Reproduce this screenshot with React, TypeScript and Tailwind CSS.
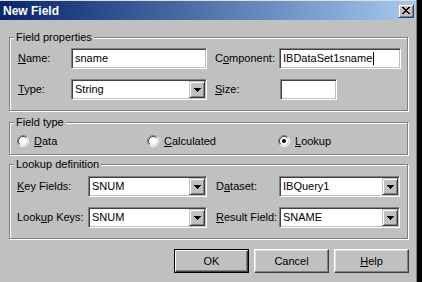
import type { ReactNode } from 'react';

const sunken =
  'border border-t-[#808080] border-l-[#808080] border-b-white border-r-white shadow-[inset_1px_1px_0_#404040,inset_-1px_-1px_0_#c0c0c0]';
const raised =
  'border border-t-[#c0c0c0] border-l-[#c0c0c0] border-b-[#404040] border-r-[#404040] shadow-[inset_1px_1px_0_#fff,inset_-1px_-1px_0_#808080] bg-[#c0c0c0]';

const U = ({ children }: { children: ReactNode }) => <span className="underline">{children}</span>;

const Group = ({ title, className, children }: { title: string; className: string; children: ReactNode }) => (
  <div className={`relative ml-[9px] w-[399px] border border-[#808080] shadow-[inset_1px_1px_0_#fff,1px_1px_0_#fff] ${className}`}>
    <span className="absolute left-[4px] top-[-7px] bg-[#c0c0c0] px-[2px] leading-[13px]">{title}</span>
    {children}
  </div>
);

const TextBox = ({ value, width, caret }: { value: string; width: string; caret?: boolean }) => (
  <div className={`${sunken} ${width} h-[21px] bg-white flex items-center pl-[3px] overflow-hidden whitespace-nowrap`}>
    {value}
    {caret && <span className="ml-px w-px h-[13px] bg-black" />}
  </div>
);

const Arrow = () => (
  <svg width="7" height="4" viewBox="0 0 7 4" shapeRendering="crispEdges">
    <rect x="0" y="0" width="7" height="1" fill="#000" />
    <rect x="1" y="1" width="5" height="1" fill="#000" />
    <rect x="2" y="2" width="3" height="1" fill="#000" />
    <rect x="3" y="3" width="1" height="1" fill="#000" />
  </svg>
);

const Combo = ({ value, width }: { value: string; width: string }) => (
  <div className={`${sunken} ${width} h-[21px] bg-white flex items-center pl-[3px] pr-px whitespace-nowrap`}>
    <span>{value}</span>
    <div className={`${raised} ml-auto w-[16px] h-[17px] flex items-center justify-center`}>
      <Arrow />
    </div>
  </div>
);

const Radio = ({ checked, children, width }: { checked?: boolean; children: ReactNode; width: string }) => (
  <div className={`flex items-center ${width}`}>
    <svg width="12" height="12" viewBox="0 0 12 12">
      <circle cx="6" cy="6" r="5" fill="#fff" />
      <path d="M2.11 9.89 A5.5 5.5 0 0 1 9.89 2.11" stroke="#808080" fill="none" />
      <path d="M9.89 2.11 A5.5 5.5 0 0 1 2.11 9.89" stroke="#fff" fill="none" />
      <path d="M2.82 9.18 A4.5 4.5 0 0 1 9.18 2.82" stroke="#404040" fill="none" />
      <path d="M9.18 2.82 A4.5 4.5 0 0 1 2.82 9.18" stroke="#d4d0c8" fill="none" />
      {checked && <circle cx="6" cy="6" r="2" fill="#000" />}
    </svg>
    <span className="ml-[5px]">{children}</span>
  </div>
);

const Button = ({ children, isDefault }: { children: ReactNode; isDefault?: boolean }) =>
  isDefault ? (
    <div className="w-[75px] h-[24px] border border-black">
      <div className="w-full h-full border border-t-white border-l-white border-b-[#404040] border-r-[#404040] shadow-[inset_-1px_-1px_0_#808080] flex items-center justify-center">
        {children}
      </div>
    </div>
  ) : (
    <div className="w-[75px] h-[24px] border border-t-white border-l-white border-b-[#404040] border-r-[#404040] shadow-[inset_-1px_-1px_0_#808080,inset_1px_1px_0_#dfdfdf] flex items-center justify-center">
      {children}
    </div>
  );

const CloseIcon = () => (
  <svg width="8" height="7" viewBox="0 0 8 7" shapeRendering="crispEdges">
    <rect x="0" y="0" width="2" height="1" />
    <rect x="6" y="0" width="2" height="1" />
    <rect x="1" y="1" width="2" height="1" />
    <rect x="5" y="1" width="2" height="1" />
    <rect x="2" y="2" width="4" height="1" />
    <rect x="3" y="3" width="2" height="1" />
    <rect x="2" y="4" width="4" height="1" />
    <rect x="1" y="5" width="2" height="1" />
    <rect x="5" y="5" width="2" height="1" />
    <rect x="0" y="6" width="2" height="1" />
    <rect x="6" y="6" width="2" height="1" />
  </svg>
);

const App = () => {
  return (
    <div className="w-[422px] h-[282px] flex bg-[#c0c0c0] text-[11px] leading-[13px] text-black font-['Liberation_Sans',Arial,sans-serif] overflow-hidden">
      <div className="w-[416px] flex flex-col">
        <div className="h-px bg-[#dfdfdf]" />
        <div className="h-[19px] bg-linear-to-r from-[#0a246a] to-[#a6caf0] flex items-center pl-[3px] pr-[2px]">
          <span className="text-white font-bold text-[12px] leading-none">New Field</span>
          <div className={`${raised} ml-auto w-[16px] h-[14px] flex items-center justify-center`}>
            <CloseIcon />
          </div>
        </div>

        <Group title="Field properties" className="mt-[17px] pt-[10px] pb-[10px]">
          <div className="flex flex-col gap-[10px]">
            <div className="flex items-center h-[21px]">
              <span className="w-[61px] pl-[8px]">
                <U>N</U>ame:
              </span>
              <TextBox value="sname" width="w-[136px]" />
              <span className="w-[72px] pl-[8px]">
                C<U>o</U>mponent:
              </span>
              <TextBox value="IBDataSet1sname" width="w-[122px]" caret />
            </div>
            <div className="flex items-center h-[21px]">
              <span className="w-[61px] pl-[8px]">
                <U>T</U>ype:
              </span>
              <Combo value="String" width="w-[136px]" />
              <span className="w-[73px] pl-[8px]">
                <U>S</U>ize:
              </span>
              <TextBox value="" width="w-[57px]" />
            </div>
          </div>
        </Group>

        <Group title="Field type" className="mt-[11px] pt-[10px] pb-[5px]">
          <div className="flex items-center h-[16px] pl-[7px]">
            <Radio width="w-[130px]">
              <U>D</U>ata
            </Radio>
            <Radio width="w-[131px]">
              <U>C</U>alculated
            </Radio>
            <Radio width="w-[100px]" checked>
              <U>L</U>ookup
            </Radio>
          </div>
        </Group>

        <Group title="Lookup definition" className="mt-[9px] pt-[11px] pb-[10px]">
          <div className="flex flex-col gap-[10px]">
            <div className="flex items-center h-[21px]">
              <span className="w-[78px] pl-[7px]">
                <U>K</U>ey Fields:
              </span>
              <Combo value="SNUM" width="w-[119px]" />
              <span className="w-[72px] pl-[9px]">
                D<U>a</U>taset:
              </span>
              <Combo value="IBQuery1" width="w-[121px]" />
            </div>
            <div className="flex items-center h-[21px]">
              <span className="w-[78px] pl-[7px]">
                Look<U>u</U>p Keys:
              </span>
              <Combo value="SNUM" width="w-[119px]" />
              <span className="w-[72px] pl-[9px]">
                <U>R</U>esult Field:
              </span>
              <Combo value="SNAME" width="w-[121px]" />
            </div>
          </div>
        </Group>

        <div className="ml-[9px] w-[400px] mt-[10px] flex justify-end gap-[5px]">
          <Button isDefault>OK</Button>
          <Button>Cancel</Button>
          <Button>
            <span>
              <U>H</U>elp
            </span>
          </Button>
        </div>
      </div>
      <div className="w-px bg-[#808080]" />
      <div className="flex-1 bg-black" />
    </div>
  );
};

export default App;
